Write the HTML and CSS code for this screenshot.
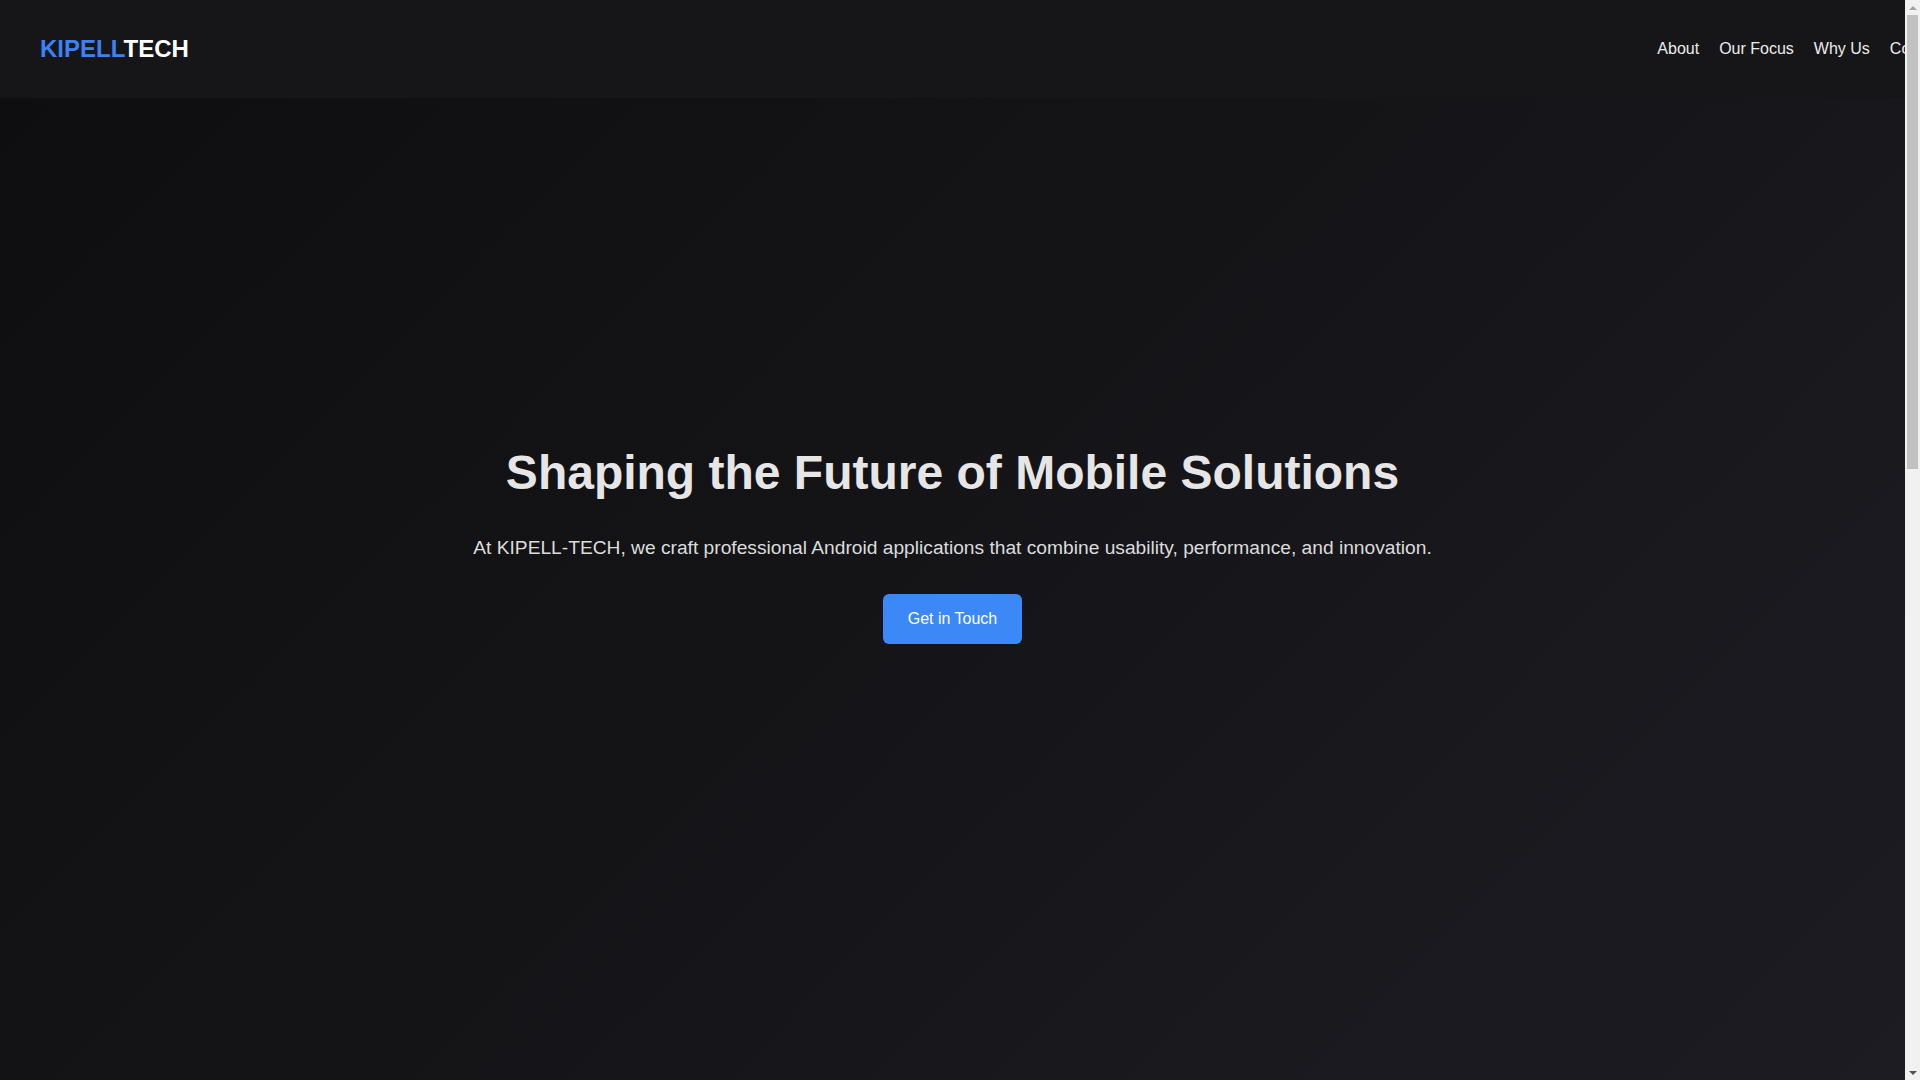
FILE: index.html
```html
<!DOCTYPE html>
<html lang="en">
<head>
<meta charset="utf-8">
<title>KIPELL-TECH</title>
<link rel="stylesheet" href="styles.css">
</head>
<body>
<div class="page">
  <header class="site-header">
    <div class="logo"><span class="logo-accent">KIPELL</span>TECH</div>
    <nav class="nav">
      <a href="#about">About</a>
      <a href="#focus">Our Focus</a>
      <a href="#why">Why Us</a>
      <a href="#contact">Contact</a>
    </nav>
  </header>
  <main>
    <section class="hero">
      <div class="hero-inner">
        <h1 class="hero-title">Shaping the Future of Mobile Solutions</h1>
        <p class="hero-text">At KIPELL-TECH, we craft professional Android applications that combine usability, performance, and innovation.</p>
        <a class="btn" href="#contact">Get in Touch</a>
      </div>
    </section>
    <section class="section" id="about">
      <h2>About</h2>
      <p>KIPELL-TECH is a team of developers and designers focused on building reliable Android applications.</p>
    </section>
    <section class="section" id="focus">
      <h2>Our Focus</h2>
      <p>Usability, performance and innovation in every mobile product we deliver.</p>
    </section>
    <section class="section" id="why">
      <h2>Why Us</h2>
      <p>Clean code, modern design and long-term support for your applications.</p>
    </section>
    <section class="section" id="contact">
      <h2>Contact</h2>
      <p>Reach out to start your next project with us.</p>
    </section>
  </main>
</div>
<div class="scrollbar" aria-hidden="true">
  <div class="sb-btn"><span class="sb-up"></span></div>
  <div class="sb-thumb"></div>
  <div class="sb-track"></div>
  <div class="sb-btn"><span class="sb-down"></span></div>
</div>
</body>
</html>
```

FILE: styles.css
```css
html {
  margin: 0;
  padding: 0;
  height: 100%;
  overflow: hidden;
}
body {
  margin: 0;
  padding: 0;
  height: 100%;
  overflow: hidden;
  display: flex;
  font-family: "Liberation Sans", Arial, Helvetica, sans-serif;
  background: #141417;
  color: #e5e5e5;
}
.page {
  flex: 1;
  min-width: 0;
  height: 100vh;
  overflow-x: hidden;
  overflow-y: auto;
  scrollbar-width: none;
}
.page::-webkit-scrollbar {
  display: none;
}
.scrollbar {
  flex: 0 0 15px;
  height: 100vh;
  background: #f1f1f1;
  display: flex;
  flex-direction: column;
}
.sb-btn {
  height: 15px;
  flex: 0 0 15px;
  display: flex;
  align-items: center;
  justify-content: center;
}
.sb-up {
  width: 0;
  height: 0;
  border-left: 4px solid transparent;
  border-right: 4px solid transparent;
  border-bottom: 4px solid #a3a3a3;
}
.sb-down {
  width: 0;
  height: 0;
  border-left: 4px solid transparent;
  border-right: 4px solid transparent;
  border-top: 4px solid #505050;
}
.sb-thumb {
  flex: 0 0 454px;
  margin: 0 2px;
  background: #c1c1c1;
}
.sb-track {
  flex: 1;
}
.site-header {
  position: sticky;
  top: 0;
  z-index: 10;
  width: 100%;
  box-sizing: content-box;
  height: 98px;
  margin-bottom: -98px;
  padding: 0 40px;
  display: flex;
  align-items: center;
  justify-content: space-between;
  background: #161618;
}
.logo {
  font-size: 24px;
  font-weight: bold;
  color: #ffffff;
}
.logo-accent {
  color: #3b82f6;
}
.nav {
  display: flex;
  gap: 20px;
}
.nav a {
  color: #ececec;
  text-decoration: none;
  font-size: 16px;
}
.hero {
  min-height: 100vh;
  box-sizing: border-box;
  padding-top: 8.5px;
  display: flex;
  align-items: center;
  justify-content: center;
  text-align: center;
  background: linear-gradient(135deg, #0e0e10 0%, #141417 45%, #1d1c23 100%);
}
.hero-inner {
  display: flex;
  flex-direction: column;
  align-items: center;
}
.hero-title {
  margin: 0 0 36.5px;
  font-size: 48px;
  font-weight: bold;
  color: #e6e6e6;
  line-height: normal;
}
.hero-text {
  margin: 0 0 35px;
  font-size: 19.2px;
  color: #dcdcdc;
  line-height: normal;
}
.btn {
  display: inline-block;
  padding: 16px 24.5px;
  background: #3b88f6;
  color: #ffffff;
  text-decoration: none;
  font-size: 16px;
  border-radius: 6px;
}
.section {
  min-height: 350px;
  padding: 60px 40px;
  box-sizing: border-box;
  background: #18181b;
  text-align: center;
}
.section h2 {
  margin: 0 0 16px;
  font-size: 32px;
}
.section p {
  margin: 0;
  font-size: 18px;
  color: #bdbdbd;
}
```
